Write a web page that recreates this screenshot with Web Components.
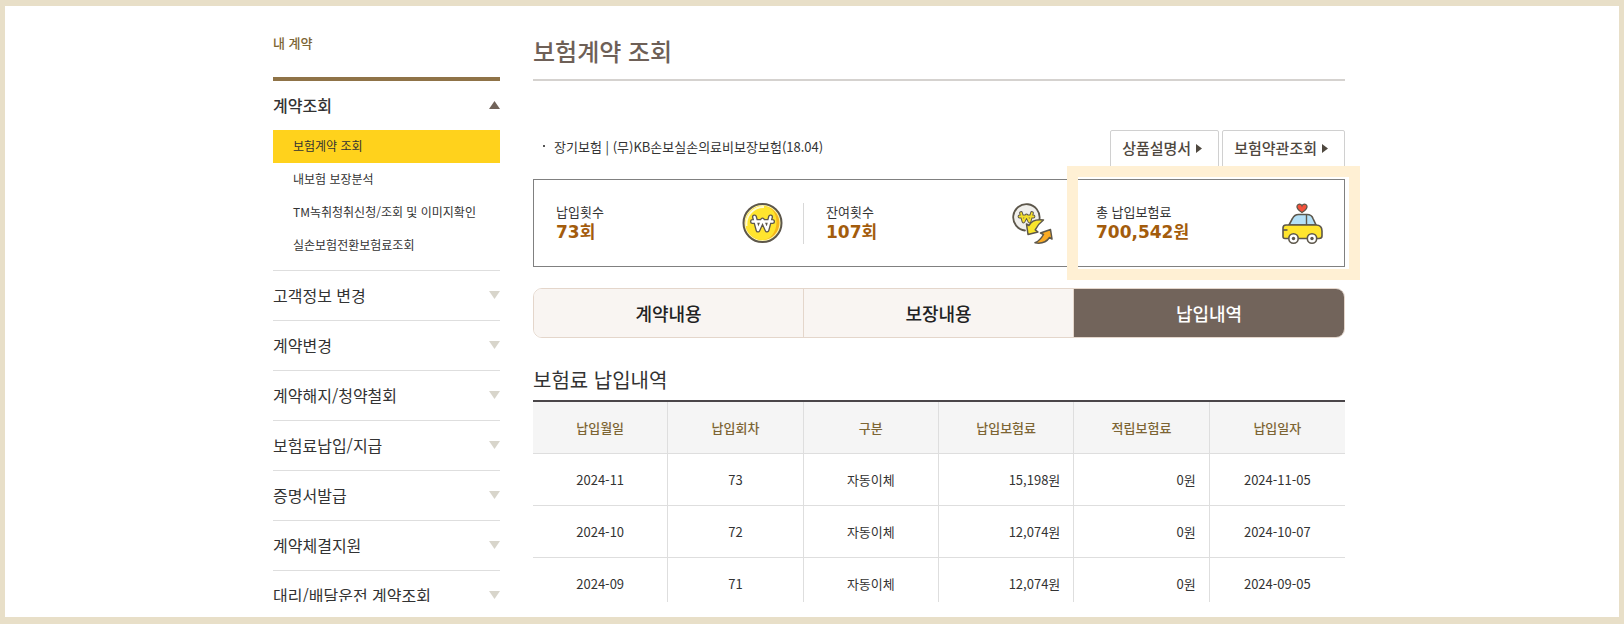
<!DOCTYPE html>
<html lang="ko">
<head>
<meta charset="UTF-8">
<meta name="viewport" content="width=device-width, initial-scale=1.0">
<title>보험계약 조회</title>
<style>
    body {
        margin: 0;
        font-family: "Noto Sans CJK KR", "Noto Sans", sans-serif;
        font-size: 13px;
        line-height: 20px;
        color: #333;
    }
</style>
</head>
<body>
<page-frame>
    <side-menu slot="side" heading="내 계약">
        <menu-group label="계약조회" open>
            <menu-link current>보험계약 조회</menu-link>
            <menu-link>내보험 보장분석</menu-link>
            <menu-link>TM녹취청취신청/조회 및 이미지확인</menu-link>
            <menu-link>실손보험전환보험료조회</menu-link>
        </menu-group>
        <menu-group label="고객정보 변경"></menu-group>
        <menu-group label="계약변경"></menu-group>
        <menu-group label="계약해지/청약철회"></menu-group>
        <menu-group label="보험료납입/지급"></menu-group>
        <menu-group label="증명서발급"></menu-group>
        <menu-group label="계약체결지원"></menu-group>
        <menu-group label="대리/배달운전 계약조회"></menu-group>
    </side-menu>

    <page-title>보험계약 조회</page-title>
    <product-bar>
        장기보험 | (무)KB손보실손의료비보장보험(18.04)
        <doc-button slot="actions">상품설명서</doc-button>
        <doc-button slot="actions">보험약관조회</doc-button>
    </product-bar>
    <summary-box>
        <summary-item label="납입횟수" value="73회" icon="coin"></summary-item>
        <summary-item label="잔여횟수" value="107회" icon="cycle"></summary-item>
        <summary-item label="총 납입보험료" value="700,542원" icon="car" marked></summary-item>
    </summary-box>
    <tab-bar tabs="계약내용,보장내용,납입내역" selected="2"></tab-bar>
    <payment-table heading="보험료 납입내역"></payment-table>
</page-frame>

<script>
class PageFrame extends HTMLElement {
    constructor() {
        super();
        this.attachShadow({mode: 'open'});
    }

    connectedCallback() {
        this.shadowRoot.innerHTML = `
        <style>
            :host {
                display: block;
                box-sizing: border-box;
                height: 100vh;
                border: solid #e8dfc8;
                border-width: 6px 5px 7px;
                padding: 0 6px 15px 0;
                background: #fff;
            }

            .clip {
                height: 100%;
                overflow: hidden;
            }

            .columns {
                display: flex;
                gap: 33px;
                max-width: 1072px;
                margin: 0 auto;
                padding: 0 16px;
            }

            .side {
                flex: 0 0 227px;
            }

            main {
                flex: 1;
                min-width: 0;
            }
        </style>
        <div class="clip">
            <div class="columns">
                <div class="side"><slot name="side"></slot></div>
                <main><slot></slot></main>
            </div>
        </div>
        `;
    }
}

class SideMenu extends HTMLElement {
    constructor() {
        super();
        this.attachShadow({mode: 'open'});
    }

    connectedCallback() {
        this.shadowRoot.innerHTML = `
        <style>
            :host {
                display: block;
            }

            h2 {
                margin: 0;
                padding: 27px 0 24px;
                border-bottom: 4px solid #8f7347;
                font-size: 13px;
                line-height: 20px;
                font-weight: 500;
                color: #7d6534;
            }
        </style>
        <nav aria-label="${this.getAttribute('heading')}">
            <h2>${this.getAttribute('heading')}</h2>
            <slot></slot>
        </nav>
        `;
    }
}

class MenuGroup extends HTMLElement {
    constructor() {
        super();
        this.attachShadow({mode: 'open'});
    }

    connectedCallback() {
        const open = this.hasAttribute('open');
        this.shadowRoot.innerHTML = `
        <style>
            :host {
                display: block;
                border-bottom: 1px solid #dedede;
            }

            button {
                display: flex;
                align-items: center;
                justify-content: space-between;
                width: 100%;
                height: 49px;
                margin: 0;
                padding: 0 0 2px;
                border: 0;
                background: none;
                font: inherit;
                font-size: 16px;
                line-height: 24px;
                color: #333;
                text-align: left;
                cursor: pointer;
            }

            :host([open]) button {
                font-weight: 500;
            }

            svg {
                width: 11px;
                height: 8px;
                fill: #d8d5cb;
            }

            :host([open]) svg {
                fill: #71635a;
                transform: rotate(180deg);
            }

            .items {
                padding-bottom: 8px;
            }
        </style>
        <button type="button" aria-expanded="${open}">
            ${this.getAttribute('label')}
            <svg viewBox="0 0 11 8" aria-hidden="true"><path d="M0 0h11L5.500 8z"/></svg>
        </button>
        ${open ? '<div class="items"><slot></slot></div>' : ''}
        `;
    }
}

class MenuLink extends HTMLElement {
    constructor() {
        super();
        this.attachShadow({mode: 'open'});
    }

    connectedCallback() {
        this.shadowRoot.innerHTML = `
        <style>
            :host {
                display: block;
            }

            a {
                display: block;
                padding: 0 20px 2px;
                font-size: 12px;
                line-height: 31px;
                color: #333;
                text-decoration: none;
                white-space: nowrap;
            }

            :host([current]) a {
                background: #ffd21c;
            }
        </style>
        <a href="#"><slot></slot></a>
        `;
    }
}

class PageTitle extends HTMLElement {
    constructor() {
        super();
        this.attachShadow({mode: 'open'});
    }

    connectedCallback() {
        this.shadowRoot.innerHTML = `
        <style>
            :host {
                display: block;
            }

            h1 {
                margin: 0;
                padding: 27px 0 10px;
                border-bottom: 2px solid #d5d2cf;
                font-size: 24px;
                line-height: 36px;
                font-weight: 500;
                color: #6e6057;
            }
        </style>
        <h1><slot></slot></h1>
        `;
    }
}

class ProductBar extends HTMLElement {
    constructor() {
        super();
        this.attachShadow({mode: 'open'});
    }

    connectedCallback() {
        this.shadowRoot.innerHTML = `
        <style>
            :host {
                display: flex;
                justify-content: space-between;
                margin-top: 49px;
            }

            .name {
                display: flex;
                align-items: center;
                gap: 9px;
                height: 34px;
                padding-left: 10px;
            }

            .name::before {
                content: "";
                width: 2px;
                height: 2px;
                margin-bottom: 3px;
                background: #555;
            }

            .actions {
                display: flex;
                gap: 3px;
            }
        </style>
        <div class="name"><span><slot></slot></span></div>
        <div class="actions"><slot name="actions"></slot></div>
        `;
    }
}

class DocButton extends HTMLElement {
    constructor() {
        super();
        this.attachShadow({mode: 'open'});
    }

    connectedCallback() {
        this.shadowRoot.innerHTML = `
        <style>
            :host {
                display: block;
            }

            button {
                display: flex;
                align-items: center;
                gap: 5px;
                height: 38px;
                padding: 0 16px 2px 11px;
                border: 1px solid #d0d0d0;
                border-radius: 2px;
                background: #fff;
                font: inherit;
                font-size: 15px;
                line-height: 22px;
                font-weight: 500;
                color: #4f483f;
                cursor: pointer;
            }

            svg {
                width: 6px;
                height: 9px;
                fill: #4f483f;
            }
        </style>
        <button type="button">
            <slot></slot>
            <svg viewBox="0 0 6 9" aria-hidden="true"><path d="M0 0l6 4.500L0 9z"/></svg>
        </button>
        `;
    }
}

class SummaryBox extends HTMLElement {
    constructor() {
        super();
        this.attachShadow({mode: 'open'});
    }

    connectedCallback() {
        this.shadowRoot.innerHTML = `
        <style>
            :host {
                display: grid;
                grid-template-columns: repeat(3, 1fr);
                margin-top: 11px;
                border: 1px solid #808080;
                background: #fff;
            }
        </style>
        <slot></slot>
        `;
    }
}

const icons = {
    coin: `
        <circle cx="20.500" cy="20" r="19" fill="#fff7a8" stroke="#5d574b" stroke-width="2"/>
        <circle cx="20.500" cy="20" r="17" fill="#f6b71a"/>
        <path d="M20.500 3a17 17 0 1 0 0 34c8 0 14-8 14-18s-6-16-14-16z" fill="#ffe52e"/>
        <path d="M4.500 23A17 17 0 0 1 22 4" fill="none" stroke="#fffbd0" stroke-width="2"/>
        <g fill="none" stroke-linecap="round" stroke-linejoin="round">
            <path d="M12.500 14l3.500 13 4.500-10 4.500 10 3.500-13M10.500 18.500h20" stroke="#5d574b" stroke-width="5"/>
            <path d="M12.500 14l3.500 13 4.500-10 4.500 10 3.500-13M10.500 18.500h20" stroke="#fff" stroke-width="2.400"/>
        </g>`,
    cycle: `
        <path d="M13 27.500A13.200 13.200 0 1 1 27.500 16" fill="#f0efeb" stroke="#5d574b" stroke-width="1.800" stroke-linecap="round"/>
        <g fill="none" stroke-linejoin="round" stroke-linecap="round">
            <path d="M9 10l2.500 8.500 3-6 3 6L20 10M7.500 13.500h14" stroke="#5d574b" stroke-width="3.800"/>
            <path d="M9 10l2.500 8.500 3-6 3 6L20 10M7.500 13.500h14" stroke="#f5df2b" stroke-width="1.800"/>
        </g>
        <path d="M31.500 17c-7-1-12 .5-14.500 5.500L14.500 21 16 31.500l10-2.500-2.800-2.200c2-4 4.500-7 8.300-9.800z" fill="#f9e52c" stroke="#5d574b" stroke-width="1.500" stroke-linejoin="round"/>
        <path d="M23 39.800c7 1.200 12-1.500 14.500-5.300l2.500 1.500-1.500-9.500L28.500 30l3 1.500c-2 3.500-4.500 6.500-8.500 8.300z" fill="#fbab24" stroke="#5d574b" stroke-width="1.500" stroke-linejoin="round"/>`,
    car: `
        <path d="M20 9.500c-4-2.500-6-4.500-4.800-7C16.500.3 19.300.8 20 2.800 20.700.8 23.500.3 24.800 2.500 26 5 24 7 20 9.500z" fill="#f4513b" stroke="#5d574b" stroke-width="1.200"/>
        <path d="M7 22l3.500-6.500C12 12.500 13.500 11.500 16.500 11.500H25c3 0 5 1 6 4L34 22z" fill="#b4e0f7" stroke="#5d574b" stroke-width="1.600"/>
        <path d="M24.500 11.500V22" stroke="#5d574b" stroke-width="1.400"/>
        <path d="M4 22h30c4 0 6 2 6 6v5c0 2-1 2.500-3 2.500H3c-1.500 0-2-.5-2-2V25c0-2 1-3 3-3z" fill="#ffe52e" stroke="#5d574b" stroke-width="1.600"/>
        <path d="M1 27h4.500" stroke="#5d574b" stroke-width="1.600"/>
        <g fill="#fff" stroke="#5d574b" stroke-width="1.600">
            <circle cx="11.500" cy="35.500" r="4.700"/>
            <circle cx="30" cy="35.500" r="4.700"/>
        </g>
        <g fill="#5d574b"><circle cx="11.500" cy="35.500" r="1.700"/><circle cx="30" cy="35.500" r="1.700"/></g>`
};

class SummaryItem extends HTMLElement {
    constructor() {
        super();
        this.attachShadow({mode: 'open'});
    }

    connectedCallback() {
        this.shadowRoot.innerHTML = `
        <style>
            :host {
                display: flex;
                align-items: center;
                justify-content: space-between;
                position: relative;
                height: 86px;
                padding-left: 22px;
            }

            dl, dt, dd {
                margin: 0;
            }

            dl {
                padding-bottom: 3px;
            }

            dt {
                line-height: 21px;
            }

            dd {
                font-family: "DejaVu Sans", "Noto Sans CJK KR", sans-serif;
                font-size: 17px;
                line-height: 20px;
                font-weight: 700;
                color: #a35c0c;
            }

            .icon {
                padding-right: 20px;
                border-right: 1px solid #d8d8d8;
            }

            :host(:last-child) .icon {
                border-color: transparent;
            }

            svg {
                display: block;
                width: 41px;
                height: 41px;
            }

            /* highlight frame lies over the box border and its neighbours */
            :host([marked])::after {
                content: "";
                position: absolute;
                inset: -14px -16px -14px -7px;
                border: 11px solid #fff0d4;
                pointer-events: none;
            }
        </style>
        <dl>
            <dt>${this.getAttribute('label')}</dt>
            <dd>${this.getAttribute('value')}</dd>
        </dl>
        <div class="icon">
            <svg viewBox="0 0 41 41" aria-hidden="true">${icons[this.getAttribute('icon')]}</svg>
        </div>
        `;
    }
}

class TabBar extends HTMLElement {
    constructor() {
        super();
        this.attachShadow({mode: 'open'});
    }

    connectedCallback() {
        const selected = Number(this.getAttribute('selected'));
        const tabs = this.getAttribute('tabs').split(',');
        this.shadowRoot.innerHTML = `
        <style>
            :host {
                display: block;
                margin-top: 21px;
            }

            .tabs {
                display: grid;
                grid-template-columns: repeat(3, 1fr);
                overflow: hidden;
                border: 1px solid #e4d6cb;
                border-radius: 9px;
            }

            button {
                height: 48px;
                margin: 0;
                padding: 0;
                border: 0;
                border-right: 1px solid #e4d6cb;
                background: #f9f5f2;
                font: inherit;
                font-size: 18px;
                line-height: 26px;
                font-weight: 500;
                color: #222;
                cursor: pointer;
            }

            button:last-child {
                border-right: 0;
            }

            button[aria-selected="true"] {
                background: #72645b;
                color: #fff;
            }
        </style>
        <div class="tabs" role="tablist">
            ${tabs.map((tab, i) => `<button type="button" role="tab" aria-selected="${i === selected}">${tab}</button>`).join('')}
        </div>
        `;
    }
}

const payments = [
    ['2024-11', '73', '자동이체', '15,198원', '0원', '2024-11-05'],
    ['2024-10', '72', '자동이체', '12,074원', '0원', '2024-10-07'],
    ['2024-09', '71', '자동이체', '12,074원', '0원', '2024-09-05']
];

class PaymentTable extends HTMLElement {
    constructor() {
        super();
        this.attachShadow({mode: 'open'});
    }

    connectedCallback() {
        const columns = ['납입월일', '납입회차', '구분', '납입보험료', '적립보험료', '납입일자'];
        this.shadowRoot.innerHTML = `
        <style>
            :host {
                display: block;
                margin-top: 27px;
            }

            h2 {
                margin: 0;
                padding-bottom: 5px;
                font-size: 20px;
                line-height: 30px;
                font-weight: 400;
            }

            table {
                width: 100%;
                table-layout: fixed;
                border-top: 2px solid #4a4649;
                border-spacing: 0;
            }

            th, td {
                box-sizing: border-box;
                height: 52px;
                padding: 0 13px;
                border-right: 1px solid #dedede;
                border-bottom: 1px solid #dedede;
                text-align: center;
            }

            th {
                background: #f5f5f5;
                font-weight: 500;
                color: #7d6534;
            }

            th:last-child, td:last-child {
                border-right: 0;
            }

            .amount {
                text-align: right;
            }
        </style>
        <h2 id="heading">${this.getAttribute('heading')}</h2>
        <table aria-labelledby="heading">
            <thead>
                <tr>${columns.map(name => `<th scope="col">${name}</th>`).join('')}</tr>
            </thead>
            <tbody>
                ${payments.map(row => `<tr>${row.map(cell => `<td${cell.endsWith('원') ? ' class="amount"' : ''}>${cell}</td>`).join('')}</tr>`).join('')}
            </tbody>
        </table>
        `;
    }
}

customElements.define('page-frame', PageFrame);
customElements.define('side-menu', SideMenu);
customElements.define('menu-group', MenuGroup);
customElements.define('menu-link', MenuLink);
customElements.define('page-title', PageTitle);
customElements.define('product-bar', ProductBar);
customElements.define('doc-button', DocButton);
customElements.define('summary-box', SummaryBox);
customElements.define('summary-item', SummaryItem);
customElements.define('tab-bar', TabBar);
customElements.define('payment-table', PaymentTable);
</script>
</body>
</html>
